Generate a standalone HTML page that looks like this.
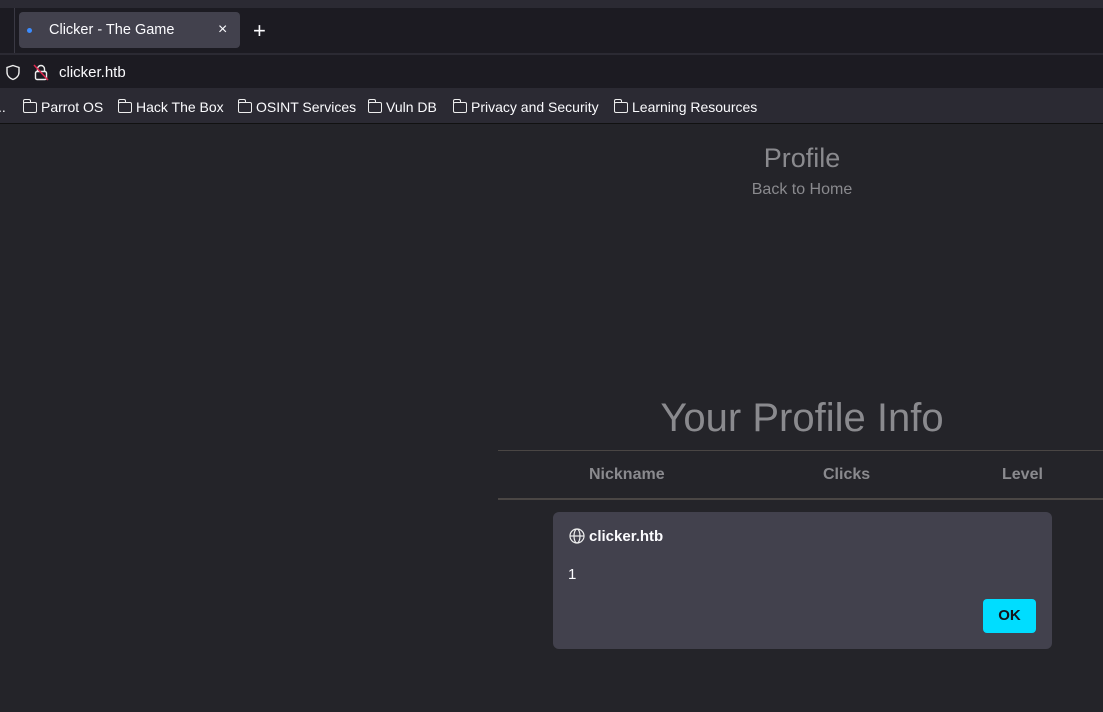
<!DOCTYPE html>
<html><head><meta charset="utf-8"><style>
*{margin:0;padding:0;box-sizing:border-box}
body{width:1103px;height:712px;overflow:hidden;background:#242429;font-family:"Liberation Sans",sans-serif;position:relative}
.ui{font-family:"Liberation Sans",sans-serif}
.abs{position:absolute}
.bm{position:absolute;top:99px;color:#fbfbfe;font-size:14px;white-space:nowrap}
.fold{position:absolute;left:-18px;top:3px;width:14px;height:11px;border:1.3px solid #eee;border-radius:2px}
.fold:before{content:"";position:absolute;left:-1px;top:-4px;width:6px;height:3px;border:1.3px solid #eee;border-bottom:none;border-radius:2px 2px 0 0}
</style></head><body>
<div class="abs" style="left:0;top:0;width:1103px;height:8px;background:#2b2a33"></div>
<div class="abs" style="left:0;top:8px;width:1103px;height:45px;background:#1c1b22"></div>
<div class="abs" style="left:14px;top:8px;width:1px;height:45px;background:#3a3944"></div>
<div class="abs ui" style="left:19px;top:12px;width:221px;height:36px;background:#42414d;border-radius:4px;color:#fbfbfe;font-size:14.5px">
 <div class="abs" style="left:8px;top:16px;width:5px;height:5px;border-radius:50%;background:#3b8cff"></div>
 <div class="abs" style="left:30px;top:10px">Clicker - The Game</div>
 <div class="abs" style="left:199px;top:9px;font-size:16px">×</div>
</div>
<div class="abs ui" style="left:253px;top:18px;color:#fbfbfe;font-size:22px">+</div>
<div class="abs" style="left:0;top:53px;width:1103px;height:35px;background:#1c1b22;border-top:2px solid #2b2a33"></div>
<svg class="abs" style="left:5px;top:64px" width="16" height="17" viewBox="0 0 16 17"><path d="M8 1.5 L14 3.5 V8 C14 12 11 14.5 8 15.5 C5 14.5 2 12 2 8 V3.5 Z" fill="none" stroke="#eee" stroke-width="1.4"/></svg>
<svg class="abs" style="left:33px;top:64px" width="16" height="17" viewBox="0 0 16 17"><path d="M4.5 7 V5 A3.5 3.5 0 0 1 11.5 5 V7" fill="none" stroke="#eee" stroke-width="1.4"/><rect x="2.5" y="7.5" width="11" height="8" rx="1.5" fill="none" stroke="#eee" stroke-width="1.4"/><path d="M1 1 L15 16" stroke="#e22850" stroke-width="1.5"/></svg>
<div class="abs ui" style="left:59px;top:64px;color:#fbfbfe;font-size:15px">clicker.htb</div>
<div class="abs" style="left:0;top:88px;width:1103px;height:36px;background:#2b2a33;border-bottom:1px solid #111"></div>
<div class="bm" style="left:-2px">..</div>
<div class="bm" style="left:41px"><i class="fold"></i>Parrot OS</div>
<div class="bm" style="left:136px"><i class="fold"></i>Hack The Box</div>
<div class="bm" style="left:256px"><i class="fold"></i>OSINT Services</div>
<div class="bm" style="left:386px"><i class="fold"></i>Vuln DB</div>
<div class="bm" style="left:471px"><i class="fold"></i>Privacy and Security</div>
<div class="bm" style="left:632px"><i class="fold"></i>Learning Resources</div>
<div class="abs" style="left:702px;top:143px;width:200px;text-align:center;color:#8a8a8e;font-size:27px">Profile</div>
<div class="abs" style="left:702px;top:181px;width:200px;text-align:center;color:#8a8a8e;font-size:16px">Back to Home</div>
<div class="abs" style="left:602px;top:396px;width:400px;text-align:center;color:#8a8a8e;font-size:40px">Your Profile Info</div>
<div class="abs" style="left:498px;top:450px;width:605px;height:1px;background:#4a4644"></div>
<div class="abs" style="left:498px;top:498px;width:605px;height:2px;background:#4a4644"></div>
<div class="abs" style="left:589px;top:466px;color:#8a8a8e;font-size:16px;font-weight:bold">Nickname</div>
<div class="abs" style="left:823px;top:466px;color:#8a8a8e;font-size:16px;font-weight:bold">Clicks</div>
<div class="abs" style="left:1002px;top:466px;color:#8a8a8e;font-size:16px;font-weight:bold">Level</div>
<div class="abs ui" style="left:553px;top:512px;width:499px;height:137px;background:#42414d;border-radius:6px;color:#fbfbfe">
 <svg class="abs" style="left:16px;top:16px" width="16" height="16" viewBox="0 0 16 16" fill="none" stroke="#eee" stroke-width="1.2"><circle cx="8" cy="8" r="7"/><ellipse cx="8" cy="8" rx="3" ry="7"/><path d="M1 8H15"/></svg>
 <div class="abs" style="left:36px;top:16px;font-size:15px;font-weight:bold">clicker.htb</div>
 <div class="abs" style="left:15px;top:54px;font-size:15px">1</div>
 <div class="abs" style="left:430px;top:87px;width:53px;height:34px;background:#00ddff;border-radius:4px;color:#15141a;font-weight:bold;font-size:15px;text-align:center;line-height:34px">OK</div>
</div>
</body></html>
